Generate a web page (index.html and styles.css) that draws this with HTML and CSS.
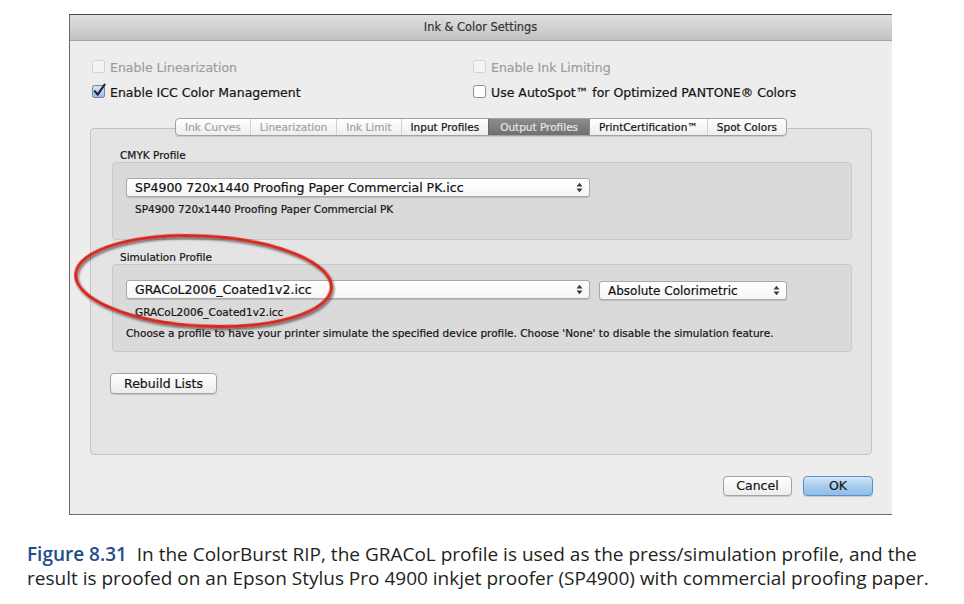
FILE: index.html
```html
<!DOCTYPE html>
<html>
<head>
<meta charset="utf-8">
<title>Ink &amp; Color Settings</title>
<link rel="stylesheet" href="styles.css">
</head>
<body>
<div class="window">
  <div class="titlebar">Ink &amp; Color Settings</div>
  <div class="content">
    <div class="checks">
      <div class="check disabled">
        <svg class="cb" width="14" height="14" viewBox="0 0 14 14"><rect x="0.5" y="1.5" width="12" height="12" rx="2" fill="#f4f4f4" stroke="#d2d2d2"/></svg>
        <span>Enable Linearization</span>
      </div>
      <div class="check disabled">
        <svg class="cb" width="14" height="14" viewBox="0 0 14 14"><rect x="0.5" y="1.5" width="12" height="12" rx="2" fill="#f4f4f4" stroke="#d2d2d2"/></svg>
        <span>Enable Ink Limiting</span>
      </div>
      <div class="check">
        <svg class="cb" width="14" height="14" viewBox="0 0 14 14">
          <defs><linearGradient id="cbg" x1="0" y1="0" x2="0" y2="1"><stop offset="0" stop-color="#dde8f5"/><stop offset="1" stop-color="#9fb9db"/></linearGradient></defs>
          <rect x="0.5" y="1.5" width="12" height="12" rx="2" fill="url(#cbg)" stroke="#6d84a6"/>
          <path d="M2.8 7.2 L5.6 10.6 L12.6 0.6" fill="none" stroke="#17253f" stroke-width="2.1" stroke-linecap="round" stroke-linejoin="round"/>
        </svg>
        <span>Enable ICC Color Management</span>
      </div>
      <div class="check">
        <svg class="cb" width="14" height="14" viewBox="0 0 14 14"><rect x="0.5" y="1.5" width="12" height="12" rx="2" fill="#ffffff" stroke="#8e8e8e"/></svg>
        <span>Use AutoSpot™ for Optimized PANTONE® Colors</span>
      </div>
    </div>

    <div class="tabview">
      <div class="tabs">
        <span class="tab off">Ink Curves</span>
        <span class="tab off">Linearization</span>
        <span class="tab off">Ink Limit</span>
        <span class="tab">Input Profiles</span>
        <span class="tab selected">Output Profiles</span>
        <span class="tab">PrintCertification™</span>
        <span class="tab">Spot Colors</span>
      </div>
      <div class="panel">
        <div class="group-label">CMYK Profile</div>
        <div class="group group-cmyk">
          <div class="popups">
            <div class="popup popup-wide">
              <span>SP4900 720x1440 Proofing Paper Commercial PK.icc</span>
              <svg class="arrows" width="7" height="11" viewBox="0 0 7 11"><path d="M0.5 4.5 L3.5 0.8 L6.5 4.5Z M0.5 6.5 L3.5 10.2 L6.5 6.5Z" fill="#3a3a3a"/></svg>
            </div>
          </div>
          <div class="sub">SP4900 720x1440 Proofing Paper Commercial PK</div>
        </div>

        <div class="group-label">Simulation Profile</div>
        <div class="group group-sim">
          <div class="popups">
            <div class="popup popup-wide">
              <span>GRACoL2006_Coated1v2.icc</span>
              <svg class="arrows" width="7" height="11" viewBox="0 0 7 11"><path d="M0.5 4.5 L3.5 0.8 L6.5 4.5Z M0.5 6.5 L3.5 10.2 L6.5 6.5Z" fill="#3a3a3a"/></svg>
            </div>
            <div class="popup popup-intent">
              <span>Absolute Colorimetric</span>
              <svg class="arrows" width="7" height="11" viewBox="0 0 7 11"><path d="M0.5 4.5 L3.5 0.8 L6.5 4.5Z M0.5 6.5 L3.5 10.2 L6.5 6.5Z" fill="#3a3a3a"/></svg>
            </div>
          </div>
          <div class="sub">GRACoL2006_Coated1v2.icc</div>
          <div class="desc">Choose a profile to have your printer simulate the specified device profile. Choose 'None' to disable the simulation feature.</div>
        </div>

        <div class="button rebuild">Rebuild Lists</div>
      </div>
    </div>

    <div class="footer">
      <div class="button">Cancel</div>
      <div class="button default">OK</div>
    </div>

    <svg class="highlight" width="300" height="130" viewBox="0 0 300 130">
      <defs>
        <filter id="sh" x="-10%" y="-20%" width="130%" height="150%">
          <feDropShadow dx="1.5" dy="2" stdDeviation="1.2" flood-color="#000" flood-opacity="0.55"/>
        </filter>
      </defs>
      <ellipse cx="133.5" cy="58" rx="128" ry="45" transform="rotate(3 133.5 58)" fill="none" stroke="#d8261c" stroke-width="3" filter="url(#sh)"/>
    </svg>
  </div>
</div>

<p class="caption"><span class="fig">Figure 8.31</span>&nbsp; In the ColorBurst RIP, the GRACoL profile is used as the press/simulation profile, and the<br>result is proofed on an Epson Stylus Pro 4900 inkjet proofer (SP4900) with commercial proofing paper.</p>
</body>
</html>
```

FILE: styles.css
```css
html, body {
  margin: 0;
  padding: 0;
  background: #ffffff;
}

body {
  padding-top: 14px;
}

.window {
  margin-left: 69px;
  width: 823px;
  height: 501px;
  box-sizing: border-box;
  border-top: 1px solid #4c4c4c;
  border-left: 1px solid #6a6a6a;
  border-bottom: 1px solid #6e6e6e;
  background: #ededed;
  font-family: "DejaVu Sans", sans-serif;
  color: #141414;
  display: flex;
  flex-direction: column;
  -webkit-text-stroke: 0.2px currentColor;
}

.titlebar {
  height: 25px;
  line-height: 25px;
  text-align: center;
  font-size: 11.4px;
  color: #333;
  background: linear-gradient(#e0e0e0, #c2c2c2);
  border-bottom: 1px solid #a4a4a4;
  padding-right: 1px;
}

.content {
  position: relative;
  flex: 1;
  display: flex;
  flex-direction: column;
}

.checks {
  display: grid;
  grid-template-columns: 381px auto;
  row-gap: 5px;
  padding: 16px 0 0 22px;
}

.check {
  height: 20px;
  display: flex;
  align-items: center;
  font-size: 12.5px;
  color: #141414;
}

.check.disabled {
  color: #9d9d9d;
}

.cb {
  flex: none;
  margin-right: 4px;
  margin-top: -2px;
  overflow: visible;
}

.tabview {
  margin: 16px 20px 0 20px;
  display: flex;
  flex-direction: column;
  align-items: center;
}

.tabs {
  position: relative;
  z-index: 1;
  display: inline-flex;
  height: 18px;
  box-sizing: border-box;
  border: 1px solid #a2a2a2;
  border-radius: 4px;
  overflow: hidden;
  background: linear-gradient(#ffffff, #ededed);
  box-shadow: 0 1px 1px rgba(0,0,0,0.12);
  margin-bottom: -8px;
  margin-left: 0;
}

.tab {
  font-size: 10.5px;
  line-height: 16px;
  padding: 0 9px;
  color: #141414;
  border-left: 1px solid #d0d0d0;
}

.tab:first-child {
  border-left: none;
}

.tab.off {
  color: #a2a2a2;
}

.tab.selected {
  background: linear-gradient(#8c8c8c, #6f6f6f);
  color: #e6e6e6;
  border-left-color: #6a6a6a;
  padding: 0 11px;
}

.tab.selected + .tab {
  border-left-color: #8a8a8a;
}

.panel {
  align-self: stretch;
  height: 327px;
  box-sizing: border-box;
  border: 1px solid #c3c3c3;
  border-radius: 4px;
  background: #e4e4e4;
  padding: 19px 19px 0 21px;
  display: flex;
  flex-direction: column;
}

.group-label {
  font-size: 10.5px;
  line-height: 14px;
  padding-left: 8px;
  color: #141414;
}

.group {
  box-sizing: border-box;
  border: 1px solid #c8c8c8;
  border-radius: 4px;
  background: #dadada;
  padding: 15px 0 0 13px;
}

.group-cmyk {
  height: 78px;
}

.group-sim {
  height: 88px;
}

.group-cmyk + .group-label {
  margin-top: 10px;
}

.popups {
  display: flex;
  align-items: flex-start;
  gap: 9px;
}

.popup {
  height: 19px;
  box-sizing: border-box;
  border: 1px solid #a9a9a9;
  border-radius: 3px;
  background: linear-gradient(#ffffff, #f6f6f6);
  box-shadow: 0 1px 1px rgba(0,0,0,0.15);
  display: flex;
  align-items: center;
  justify-content: space-between;
  padding: 0 6px 0 8px;
  font-size: 12.5px;
  color: #111;
}

.popup-wide {
  width: 464px;
}

.popup-intent {
  width: 188px;
  margin-top: 1px;
  font-size: 12px;
}

.arrows {
  flex: none;
}

.sub {
  font-size: 10.5px;
  line-height: 14px;
  margin-top: 5px;
  margin-left: 9px;
  color: #141414;
}

.desc {
  font-size: 10.5px;
  line-height: 14px;
  margin-top: 7px;
  color: #141414;
  white-space: nowrap;
}

.button {
  box-sizing: border-box;
  height: 21px;
  border: 1px solid #a3a3a3;
  border-radius: 4px;
  background: linear-gradient(#ffffff, #ececec);
  box-shadow: 0 1px 1px rgba(0,0,0,0.15);
  font-size: 12.5px;
  line-height: 19px;
  text-align: center;
  color: #141414;
}

.rebuild {
  width: 107px;
  margin-top: 21px;
  margin-left: -2px;
}

.footer {
  display: flex;
  justify-content: flex-end;
  gap: 11px;
  padding: 21px 19px 0 0;
}

.footer .button {
  width: 69px;
  height: 20px;
  line-height: 18px;
}

.footer .button.default {
  width: 70px;
  border-color: #5d8fc6;
  background: linear-gradient(#d3e6f8, #a4cbef 55%, #8fbde9);
}

.highlight {
  position: absolute;
  left: 0;
  top: 182px;
  overflow: visible;
}

.caption {
  margin: 27px 0 0 27px;
  font-family: "Open Sans", "Lato", sans-serif;
  font-size: 19px;
  line-height: 24px;
  color: #231f20;
  white-space: nowrap;
}

.fig {
  font-weight: 600;
  color: #1e4d8a;
}
```
